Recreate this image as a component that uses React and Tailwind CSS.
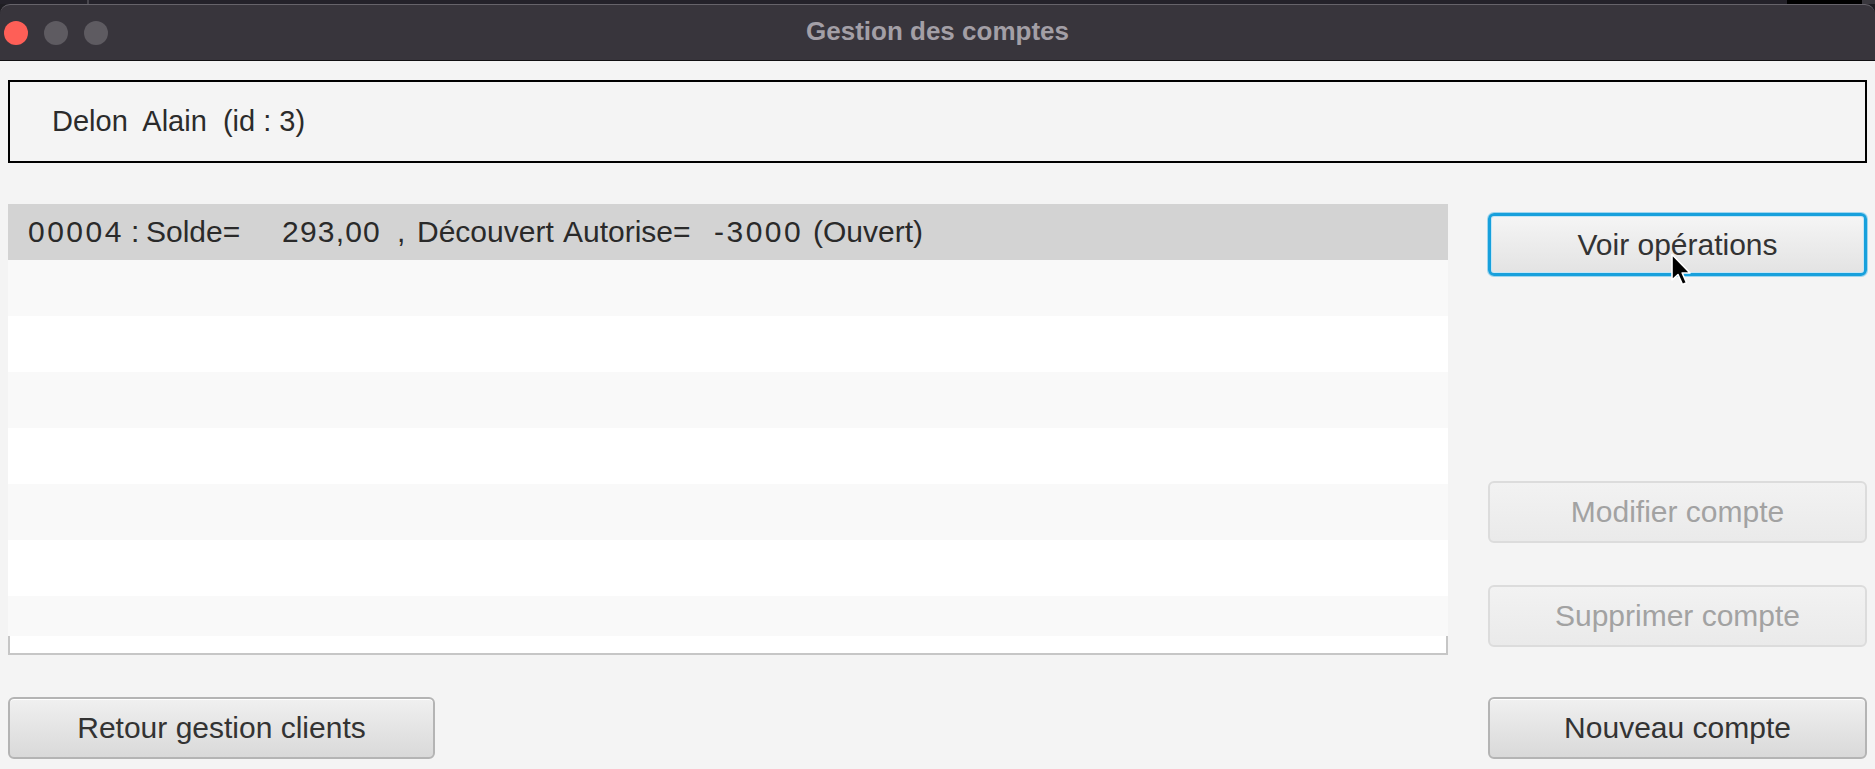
import React from "react";

function Btn({ children, kind = "normal", className = "" }) {
  let look =
    "border-2 border-[#b4b4b4] bg-linear-to-b from-[#f0f0f0] to-[#d9d9d9] text-[#333333] shadow-[inset_0_1px_0_#ffffff]";
  if (kind === "disabled") {
    look =
      "border-2 border-[#dcdcdc] bg-linear-to-b from-[#f2f2f2] to-[#eaeaea] text-[#a2a2a2]";
  }
  if (kind === "focused") {
    look =
      "border-[3px] border-[#17a0dc] bg-linear-to-b from-[#f5f5f5] to-[#e3e3e3] text-[#333333] shadow-[0_0_0_1px_#9fd6ef,inset_0_0_0_1px_#c4e6f6]";
  }
  return (
    <button
      className={
        "flex items-center justify-center rounded-[6px] text-[30px] leading-none " +
        look +
        " " +
        className
      }
    >
      {children}
    </button>
  );
}

function ListRow({ bg, children }) {
  return <div className={"w-full shrink-0 " + bg}>{children}</div>;
}

export default function App() {
  const emptyRows = [
    "h-[56px] bg-[#f9f9f9]",
    "h-[56px] bg-white",
    "h-[56px] bg-[#f9f9f9]",
    "h-[56px] bg-white",
    "h-[56px] bg-[#f9f9f9]",
    "h-[56px] bg-white",
    "h-[40px] bg-[#f9f9f9]",
  ];

  return (
    <div className="relative w-[1875px] h-[769px] overflow-hidden bg-[#1f1e23] font-['Liberation_Sans',Arial,sans-serif]">
      {/* desktop strip behind the window */}
      <div className="flex h-[4px] bg-[#24222a]">
        <div className="w-[87px]" />
        <div className="w-[2px] bg-[#48464d]" />
        <div className="flex-1" />
        <div className="w-[75px] bg-black" />
        <div className="w-[13px] bg-[#3a383e]" />
      </div>

      <div className="flex flex-col h-[765px]">
        {/* title bar */}
        <div className="relative flex items-center h-[57px] rounded-t-[10px] bg-[#38353c] border-t border-[#66636a] border-b border-b-[#111013]">
          <div className="flex items-center gap-[16px] pl-[4px]">
            <div className="w-[24px] h-[24px] rounded-full bg-[#fe5f57]" />
            <div className="w-[24px] h-[24px] rounded-full bg-[#5e5b61]" />
            <div className="w-[24px] h-[24px] rounded-full bg-[#5e5b61]" />
          </div>
          <div className="absolute inset-0 flex items-center justify-center pb-[2px] text-[26px] font-bold text-[#a39fa6]">
            Gestion des comptes
          </div>
        </div>

        {/* content */}
        <div className="flex-1 flex flex-col bg-[#f4f4f4] px-[8px]">
          <div className="mt-[19px] h-[83px] border-2 border-black flex items-center pl-[42px] text-[29px] text-[#2b2b2b] whitespace-pre">
            Delon  Alain  (id : 3)
          </div>

          <div className="flex mt-[41px]">
            <div className="w-[1440px] h-[451px] flex flex-col">
              <ListRow bg="h-[56px] bg-[#d3d3d3]">
                <div className="flex items-center h-full pl-[20px] text-[30px] text-[#2a2a2a] whitespace-pre leading-none">
                  <span className="w-[103px] tracking-[2.5px]">00004</span>
                  <span className="w-[15px]">:</span>
                  <span className="w-[136px]">Solde=</span>
                  <span className="w-[115px] tracking-[1.2px]">293,00</span>
                  <span className="w-[20px]">,</span>
                  <span className="w-[146px]">Découvert</span>
                  <span className="w-[151px]">Autorise=</span>
                  <span className="w-[99px] tracking-[2.5px]">-3000</span>
                  <span>(Ouvert)</span>
                </div>
              </ListRow>
              {emptyRows.map((c, i) => (
                <ListRow key={i} bg={c} />
              ))}
              <div className="flex-1 bg-white border-x-2 border-b-2 border-[#c6c6c6]" />
            </div>

            <div className="ml-auto w-[379px] flex flex-col">
              <Btn kind="focused" className="mt-[9px] h-[63px]">
                Voir opérations
              </Btn>
              <Btn kind="disabled" className="mt-[205px] h-[62px]">
                Modifier compte
              </Btn>
              <Btn kind="disabled" className="mt-[42px] h-[62px]">
                Supprimer compte
              </Btn>
            </div>
          </div>

          <div className="flex justify-between mt-[42px]">
            <Btn className="w-[427px] h-[62px]">Retour gestion clients</Btn>
            <Btn className="w-[379px] h-[62px]">Nouveau compte</Btn>
          </div>
        </div>
      </div>

      {/* mouse pointer over the focused button */}
      <svg
        className="absolute left-[1670px] top-[253px]"
        width="24"
        height="36"
        viewBox="0 0 24 36"
      >
        <path
          d="M2 1.5 L2 27 L8 21.5 L12.5 31.5 L16.5 29.8 L12.2 20 L20 20 Z"
          fill="#000000"
          stroke="#ffffff"
          strokeWidth="1.6"
          strokeLinejoin="round"
        />
      </svg>
    </div>
  );
}
